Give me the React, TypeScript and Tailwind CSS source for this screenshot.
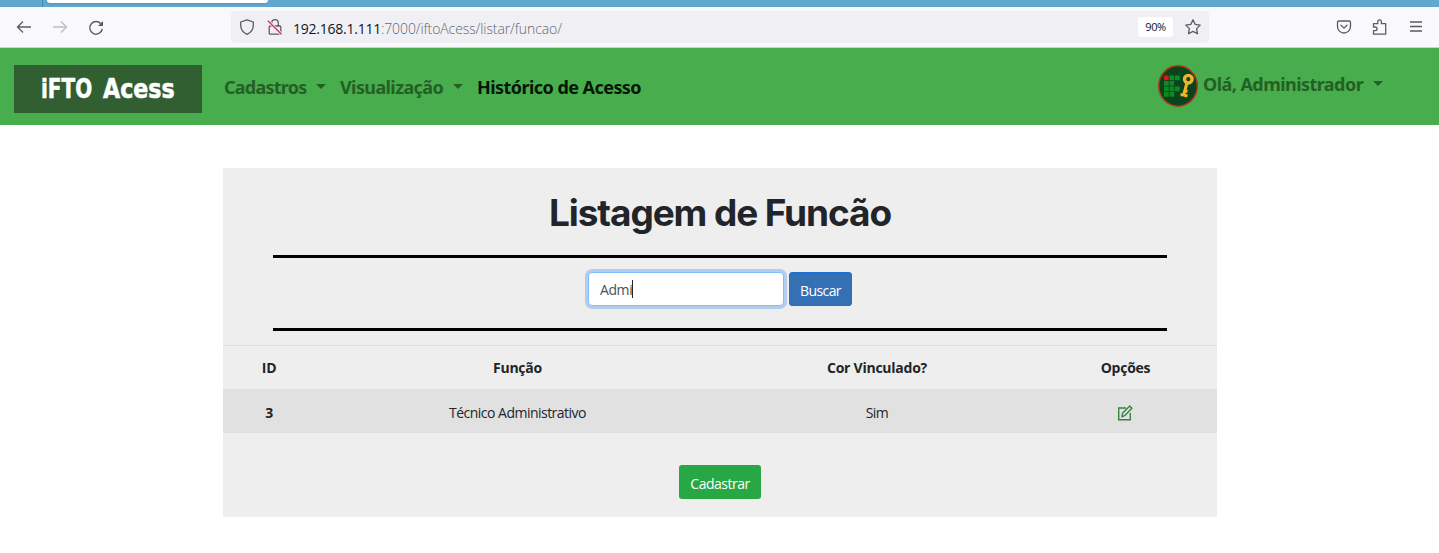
import React from "react";

const rows = [{ id: "3", funcao: "Técnico Administrativo", cor: "Sim" }];

function Caret({ className = "" }: { className?: string }) {
  return (
    <span
      className={`inline-block h-0 w-0 border-x-[5px] border-t-[5px] border-x-transparent border-t-[#246025] ${className}`}
    />
  );
}

function BrowserBar() {
  return (
    <>
      <div className="flex h-[7px] bg-[#61a8cf]">
        <div className="h-full w-[43px] border-r border-[#4187ae]" />
        <div className="ml-1 h-[3px] w-[221px] rounded-b bg-white shadow-sm" />
      </div>
      <div className="flex h-[41px] items-center border-b border-[#cfcfd4] bg-[#f9f9fb] text-[#5b5b66]">
        <svg className="ml-4 h-4 w-4" viewBox="0 0 16 16" fill="none" stroke="currentColor" strokeWidth="1.3">
          <path d="M15 8H1.5M7 2.5 1.5 8 7 13.5" />
        </svg>
        <svg className="ml-5 h-4 w-4 text-[#bdbdc2]" viewBox="0 0 16 16" fill="none" stroke="currentColor" strokeWidth="1.3">
          <path d="M1 8h13.5M9 2.5 14.500 8 9 13.500" />
        </svg>
        <svg className="ml-5 mt-px h-4 w-4" viewBox="0 0 16 16" fill="none" stroke="currentColor" strokeWidth="1.4">
          <path d="M13.300 4.300A6.300 6.300 0 1 0 14.300 9" />
          <path d="M15 1v5h-5z" fill="currentColor" stroke="none" />
        </svg>
        <div className="ml-[127px] flex h-8 w-[978px] items-center rounded bg-[#f0f0f4]">
          <svg className="ml-2 h-4 w-4" viewBox="0 0 16 16" fill="none" stroke="currentColor" strokeWidth="1.3" strokeLinejoin="round">
            <path d="M8 .8 14.300 3v3.500c0 4-2.500 7-6.300 8.800C4.200 13.500 1.700 10.500 1.700 6.500V3z" />
          </svg>
          <svg className="ml-3 h-4 w-4" viewBox="0 0 16 16" fill="none" stroke="currentColor" strokeWidth="1.3">
            <rect x="2.200" y="7" width="11.600" height="8.200" rx="1" />
            <path d="M4.700 7V4a3.300 3.300 0 0 1 6.600 0v3" />
            <path d="M.8 1.800 14.500 15.300" stroke="#f0f0f4" strokeWidth="3" />
            <path d="M.8 1.800 14.500 15.300" stroke="#e22850" strokeWidth="1.300" />
          </svg>
          <span className="ml-[10px] mt-[2px] whitespace-nowrap font-['Open_Sans',sans-serif] text-[14px] font-light tracking-[-0.1px] text-[#66666e]">
            <span className="font-normal tracking-[-0.24px] text-[#15141a]">192.168.1.111</span>:7000/iftoAcess/listar/funcao/
          </span>
          <span className="ml-auto flex h-5 w-[35px] items-center justify-center rounded-[3px] bg-white pt-px font-['Open_Sans',sans-serif] text-[11px] tracking-[-0.4px] text-[#15141a]">
            90%
          </span>
          <svg className="ml-3 mr-2 h-4 w-4" viewBox="0 0 16 16" fill="none" stroke="currentColor" strokeWidth="1.300" strokeLinejoin="round">
            <path d="m8 .8 2.200 4.600 5 .7-3.600 3.500.9 5.200L8 12.400l-4.500 2.400.9-5.200L.8 6.100l5-.7z" />
          </svg>
        </div>
        <svg className="ml-[127px] h-4 w-4" viewBox="0 0 16 16" fill="none" stroke="currentColor" strokeWidth="1.300" strokeLinecap="round" strokeLinejoin="round">
          <path d="M2.700 2h10.600c.7 0 1.200.5 1.200 1.200v4.300a6.500 6.500 0 0 1-13 0V3.200C1.500 2.500 2 2 2.700 2z" />
          <path d="m5 6.200 3 2.900 3-2.900" />
        </svg>
        <svg className="ml-5 h-4 w-4" viewBox="0 0 16 16" fill="none" stroke="currentColor" strokeWidth="1.300" strokeLinejoin="round">
          <path d="M1.500 6V4.700h4.300V2.600a1.800 1.800 0 0 1 3.600 0v2.100h4.300v10.500H1.500v-3.500h1.700a1.850 1.850 0 0 0 0-3.700H1.500z" />
        </svg>
        <svg className="ml-5 h-4 w-4" viewBox="0 0 16 16" stroke="currentColor" strokeWidth="1.300">
          <path d="M2 3h12M2 7.500h12M2 12h12" />
        </svg>
      </div>
    </>
  );
}

function Avatar() {
  return (
    <svg className="h-[42px] w-10" viewBox="0 0 40 42">
      <ellipse cx="20" cy="21" rx="19.300" ry="20.200" fill="#0a431c" stroke="#b2371c" strokeWidth="1.500" />
      <path
        fill="#0c8b22"
        d="M11.500 10.500h4.700v4.700h-4.700zM17 10.500h4.700v4.700H17zM6 16h4.700v4.700H6zM11.500 16h4.700v4.700h-4.700zM6 21.500h4.700v4.700H6zM11.500 21.500h4.700v4.700h-4.700zM17 21.500h4.700v4.700H17zM6 27h4.700v4.700H6zM11.500 27h4.700v4.700h-4.700z"
      />
      <rect x="6" y="10.500" width="4.700" height="4.700" rx="1.500" fill="#e81414" />
      <circle cx="30.300" cy="14.200" r="3.800" fill="none" stroke="#f0b42c" strokeWidth="3.400" />
      <path d="m28.800 18.500-3.300 12M26 25.500l3.500 1M26 29.800h-3.500M25.500 30l4 1" fill="none" stroke="#f0b42c" strokeWidth="3" />
    </svg>
  );
}

function Navbar() {
  return (
    <nav className="flex h-[77px] bg-[#48ad4c] font-['Noto_Sans',sans-serif] text-[18px] font-bold leading-6 text-[#246025]">
      <a className="ml-[14px] mt-[17px] flex h-12 w-[188px] items-center bg-[#315f32] pl-[27px] font-['DejaVu_Sans',sans-serif] text-[27px] text-white [-webkit-text-stroke:0.6px_white]">
        <span className="w-[62px] shrink-0 origin-left scale-x-[.74]">iFTO</span>
        <span className="origin-left scale-x-[.82]">Acess</span>
      </a>
      <a className="ml-[22px] mt-[27px] flex w-[116px] whitespace-nowrap tracking-[-0.75px]">
        Cadastros<Caret className="ml-auto mr-[14px] mt-[9px]" />
      </a>
      <a className="mt-[27px] flex w-[137px] whitespace-nowrap tracking-[-0.6px]">
        Visualização<Caret className="ml-auto mr-[14px] mt-[9px]" />
      </a>
      <a className="mt-[27px] whitespace-nowrap tracking-[-0.55px] text-[#051506]">Histórico de Acesso</a>
      <div className="ml-auto mr-14 mt-[17px] flex w-[225px]">
        <Avatar />
        <span className="ml-[5px] mt-[7px] whitespace-nowrap tracking-[-0.55px]">Olá, Administrador</span>
        <Caret className="ml-auto mt-[16px]" />
      </div>
    </nav>
  );
}

function EditIcon() {
  return (
    <svg className="relative -left-px top-px mx-auto h-4 w-4" viewBox="0 0 16 16" fill="none" stroke="#348442" strokeWidth="1.400">
      <path d="M9 3H1.700v11.700h11.600V8" />
      <path d="m4.900 11.800.8-3.900 7-6.800 2.200 2.100-6.800 7.100z" strokeLinejoin="round" />
    </svg>
  );
}

export default function App() {
  return (
    <div className="h-[553px] w-[1439px] overflow-hidden bg-white">
      <BrowserBar />
      <Navbar />
      <main className="ml-[223px] mt-[43px] flex h-[349px] w-[994px] flex-col bg-[#eee] font-['Open_Sans',sans-serif] text-[14.4px] text-[#212529]">
        <h1 className="mt-[22px] h-[65px] text-center font-['Inter',sans-serif] text-[37px] font-bold leading-[46px] tracking-[-1.1px]">
          Listagem de Funcão
        </h1>
        <div className="mx-[50px] flex h-[76px] justify-center gap-[5px] border-y-[3px] border-black pt-[14px]">
          <div className="flex h-[34px] w-[196px] items-center rounded border border-[#80bdff] bg-white pl-[11px] text-[14px] tracking-[-0.4px] text-[#495057] ring-[3px] ring-[#b5cdec]">
            <span className="pt-px">Admi</span>
            <span className="h-[18px] w-px bg-[#212529]" />
          </div>
          <button className="h-[34px] w-[63px] rounded-[3px] border border-[#1672d6] bg-[#3570b5] pt-[2px] text-[14px] tracking-[-0.6px] text-white">Buscar</button>
        </div>
        <table className="mt-[14px] w-full table-fixed border-separate border-spacing-0 text-center">
          <colgroup>
            <col className="w-[92px]" />
            <col className="w-[405px]" />
            <col className="w-[314px]" />
            <col className="w-[183px]" />
          </colgroup>
          <thead className="text-[14px] tracking-[-0.25px]">
            <tr className="h-11 [&>th]:border-t [&>th]:border-[#dedfe0]">
              <th>ID</th>
              <th>Função</th>
              <th>Cor Vinculado?</th>
              <th>Opções</th>
            </tr>
          </thead>
          <tbody className="text-[14px] tracking-[-0.52px]">
            {rows.map((r) => (
              <tr key={r.id} className="h-11 bg-[#e1e1e1] [&>*]:pt-[2px]">
                <th>{r.id}</th>
                <td>{r.funcao}</td>
                <td>{r.cor}</td>
                <td><EditIcon /></td>
              </tr>
            ))}
          </tbody>
        </table>
        <button className="mx-auto mt-8 h-[34px] w-[82px] rounded-[3px] bg-[#28a745] pt-[2px] text-[14px] tracking-[-0.5px] text-white">Cadastrar</button>
      </main>
    </div>
  );
}
